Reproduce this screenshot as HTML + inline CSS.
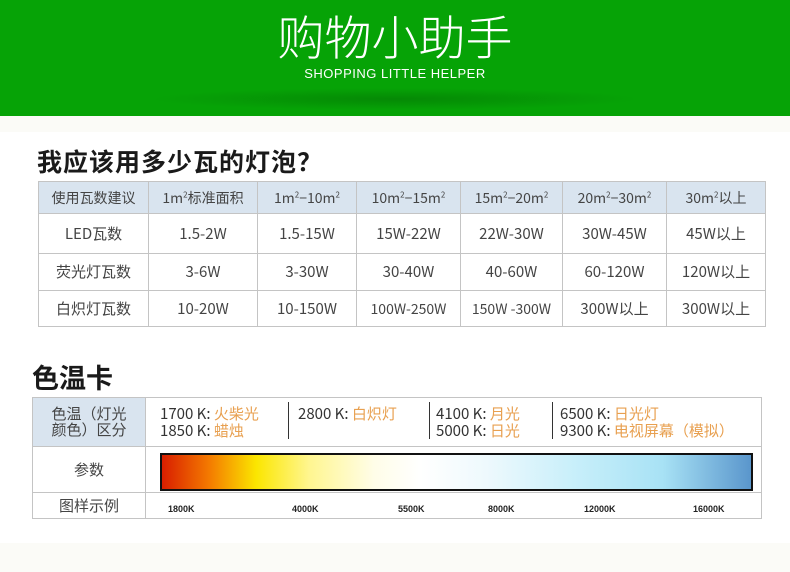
<!DOCTYPE html>
<html><head><meta charset="utf-8"><style>
*{margin:0;padding:0;box-sizing:border-box}
body{width:790px;height:572px;position:relative;background:#fff;font-family:"Liberation Sans","Noto Sans CJK SC",sans-serif;overflow:hidden;color:#333}
.hd{position:absolute;left:0;top:0;width:790px;height:116px;background:#06a306}
.hd .sh{position:absolute;left:150px;top:88px;width:490px;height:22px;background:radial-gradient(ellipse at center,rgba(0,60,0,.25),rgba(0,60,0,0) 70%)}
.t1{position:absolute;top:4px;left:0;width:790px;text-align:center;color:#fff;font-size:47px;font-family:"Noto Sans CJK SC",sans-serif;font-weight:300;line-height:62px}
.t2{position:absolute;top:66px;left:0;width:790px;text-align:center;color:#fff;font-size:13px;letter-spacing:.5px}
.band{position:absolute;left:0;width:790px;background:#fbfbf7}
.h{position:absolute;font-weight:bold;color:#1a1a1a;font-family:"Noto Sans CJK SC",sans-serif}
table{position:absolute;border-collapse:collapse}
td{border:1px solid #c4c4c4;text-align:center;font-size:15px;color:#444;font-family:"Noto Sans CJK SC",sans-serif;line-height:18px;vertical-align:middle}
.tb1 tr:first-child td{background:#d9e4ef;font-size:14px}
sup{font-size:8px;line-height:0}
.o{color:#e8a050}
.c2 div{font-family:"Noto Sans CJK SC",sans-serif}
</style></head><body>
<div class="hd"><div class="sh"></div>
<div class="t1">购物小助手</div>
<div class="t2">SHOPPING LITTLE HELPER</div></div>
<div class="band" style="top:116px;height:16px"></div>
<div class="h" style="left:37px;top:145px;font-size:25px;line-height:32px;letter-spacing:1px">我应该用多少瓦的灯泡？</div>
<table class="tb1" style="left:38px;top:181px;width:728px">
<tr style="height:32px"><td style="width:110px">使用瓦数建议</td><td style="width:109px">1m<sup>2</sup>标准面积</td><td style="width:99px">1m<sup>2</sup>−10m<sup>2</sup></td><td style="width:104px">10m<sup>2</sup>−15m<sup>2</sup></td><td style="width:102px">15m<sup>2</sup>−20m<sup>2</sup></td><td style="width:104px">20m<sup>2</sup>−30m<sup>2</sup></td><td>30m<sup>2</sup>以上</td></tr>
<tr style="height:40px"><td>LED瓦数</td><td>1.5-2W</td><td>1.5-15W</td><td>15W-22W</td><td>22W-30W</td><td>30W-45W</td><td>45W以上</td></tr>
<tr style="height:37px"><td>荧光灯瓦数</td><td>3-6W</td><td>3-30W</td><td>30-40W</td><td>40-60W</td><td>60-120W</td><td>120W以上</td></tr>
<tr style="height:36px"><td>白炽灯瓦数</td><td>10-20W</td><td>10-150W</td><td style="font-size:14px">100W-250W</td><td style="font-size:14px">150W -300W</td><td>300W以上</td><td>300W以上</td></tr>
</table>
<div class="h" style="left:32px;top:360px;font-size:27px;line-height:34px">色温卡</div>
<table style="left:32px;top:397px;width:730px">
<tr style="height:49px"><td style="width:113px;background:#d9e4ef;line-height:16px">色温（灯光<br>颜色）区分</td><td class="c2" style="text-align:left;position:relative;font-size:15px;line-height:17px;color:#333">
<div style="position:absolute;left:14px;top:7px">1700 K: <span class="o">火柴光</span><br>1850 K: <span class="o">蜡烛</span></div>
<div style="position:absolute;left:142px;top:4px;height:37px;border-left:1px solid #333"></div>
<div style="position:absolute;left:152px;top:7px">2800 K: <span class="o">白炽灯</span></div>
<div style="position:absolute;left:283px;top:4px;height:37px;border-left:1px solid #333"></div>
<div style="position:absolute;left:290px;top:7px">4100 K: <span class="o">月光</span><br>5000 K: <span class="o">日光</span></div>
<div style="position:absolute;left:406px;top:4px;height:37px;border-left:1px solid #333"></div>
<div style="position:absolute;left:414px;top:7px">6500 K: <span class="o">日光灯</span><br>9300 K: <span class="o">电视屏幕（模拟）</span></div>
</td></tr>
<tr style="height:46px"><td>参数</td><td style="position:relative"><div style="position:absolute;left:14px;top:6px;width:593px;height:38px;border:2px solid #111;background:linear-gradient(90deg,#d81e00 0%,#f47a00 8%,#fbe600 16%,#fff690 25%,#fffde8 36%,#fff 44%,#eef9fd 55%,#c8effa 70%,#a8e2f5 85%,#5a96cc 100%)"></div></td></tr>
<tr style="height:26px"><td>图样示例</td><td style="position:relative;font-size:9px;font-weight:bold;color:#222;font-family:'Liberation Sans',sans-serif">
<span style="position:absolute;left:22px;top:7px">1800K</span>
<span style="position:absolute;left:146px;top:7px">4000K</span>
<span style="position:absolute;left:252px;top:7px">5500K</span>
<span style="position:absolute;left:342px;top:7px">8000K</span>
<span style="position:absolute;left:438px;top:7px">12000K</span>
<span style="position:absolute;left:547px;top:7px">16000K</span></td></tr>
</table>
<div class="band" style="top:543px;height:29px"></div>
</body></html>
